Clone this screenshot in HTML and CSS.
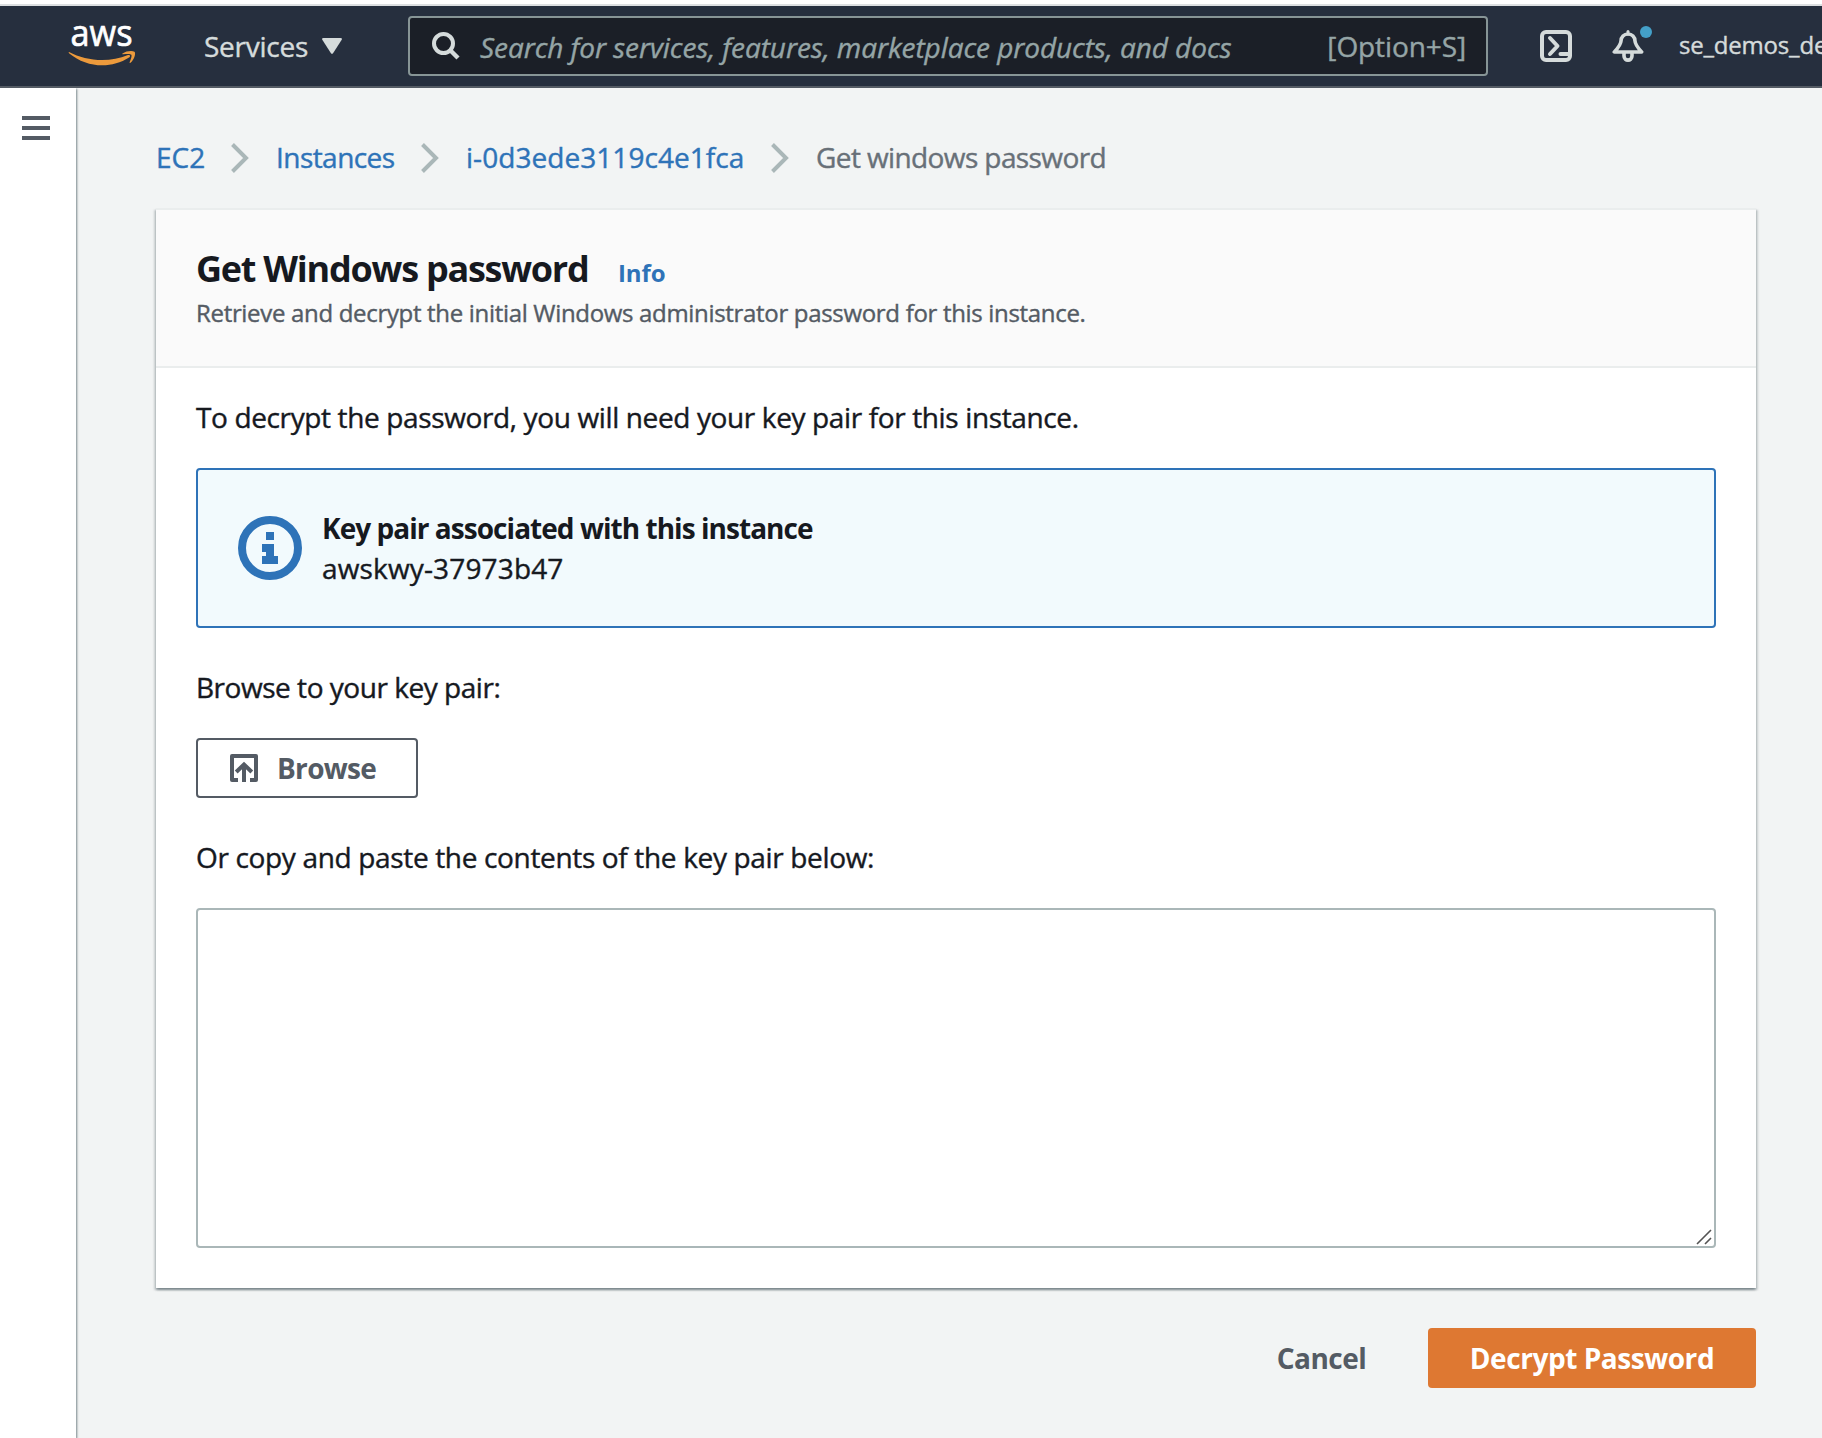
FILE: index.html
```html
<!DOCTYPE html>
<html lang="en">
<head>
<meta charset="utf-8">
<title>Get Windows password | EC2</title>
<link rel="stylesheet" href="styles.css">
</head>
<body>
<header class="nav">
  <svg class="logo" width="68" height="72" viewBox="68 10 68 72">
    <text x="70.500" y="46" textLength="62" lengthAdjust="spacingAndGlyphs">aws</text>
    <path d="M69 52 C86 61 109 63 128 55 C130 54.500 131 56.500 129 57.500 C111 69 87 68 69 53.200 C68.600 52.600 68.600 52 69 52 Z"/>
    <path d="M122.500 53.500 C126 51 132 50.400 134.500 51.700 C136 53 134.500 59.500 130.500 62.700 C129.700 63.200 129.300 62.800 129.700 62 C131 59 132 55.800 131.400 54.700 C130.300 53.500 126.500 53.900 123.200 54.300 C122.300 54.400 122 53.900 122.500 53.500 Z"/>
  </svg>
  <div class="services"><span class="t-services">Services</span>
    <svg width="20" height="16" viewBox="0 0 20 16"><path d="M1.500 0H18.500Q20.500 0 19.700 1.700L11.200 15Q10 16.700 8.800 15L.3 1.700Q-.5 0 1.500 0Z" fill="#d5dbdb"/></svg>
  </div>
  <div class="search">
    <svg width="28" height="28" viewBox="0 0 28 28" fill="none" stroke="#d5dbdb"><circle cx="11.500" cy="11.500" r="9.500" stroke-width="4"/><path d="M18 18L26 26" stroke-width="4.400"/></svg>
    <span class="placeholder">Search for services, features, marketplace products, and docs</span>
    <span class="shortcut">[Option+S]</span>
  </div>
  <svg class="shell" width="32" height="32" viewBox="0 0 32 32" fill="none" stroke="#d5dbdb" stroke-width="4"><rect x="2" y="2" width="28" height="28" rx="4"/><path d="M10 8L17.500 16L10 24" stroke-linecap="round" stroke-linejoin="round"/><path d="M20.500 24H29" stroke-linecap="round"/></svg>
  <div class="bell">
    <svg width="32" height="32" viewBox="0 0 32 32" fill="none" stroke="#d5dbdb" stroke-width="3.600" stroke-linejoin="round"><path d="M16 1.500V4" stroke-width="3" stroke-linecap="round"/><path d="M16 4C12 4 9 7 9 11C8.800 15 6 18 2.300 22H29.700C26 18 23.200 15 23 11C23 7 20 4 16 4Z"/><path d="M12 23V26C12 31.500 20 31.500 20 26V23"/></svg>
    <i class="dot"></i>
  </div>
  <span class="account">se_demos_de</span>
</header>
<div class="page">
  <aside class="side"><div class="burger"><i></i><i></i><i></i></div></aside>
  <main>
    <nav class="crumbs">
      <a class="c1">EC2</a>
      <svg width="18" height="30" viewBox="0 0 18 30"><path d="M1.500 1.500L15 15L1.500 28.500"/></svg>
      <a class="c2">Instances</a>
      <svg width="18" height="30" viewBox="0 0 18 30"><path d="M1.500 1.500L15 15L1.500 28.500"/></svg>
      <a class="c3">i-0d3ede3119c4e1fca</a>
      <svg width="18" height="30" viewBox="0 0 18 30"><path d="M1.500 1.500L15 15L1.500 28.500"/></svg>
      <span class="c4">Get windows password</span>
    </nav>
    <section class="card">
      <div class="card-head">
        <div class="title-row"><h1>Get Windows password</h1><a class="info">Info</a></div>
        <p class="desc">Retrieve and decrypt the initial Windows administrator password for this instance.</p>
      </div>
      <div class="card-body">
        <p class="intro">To decrypt the password, you will need your key pair for this instance.</p>
        <div class="alert">
          <svg width="64" height="64" viewBox="0 0 64 64"><circle cx="32" cy="32" r="28" fill="none" stroke="#2e73b8" stroke-width="8"/><path d="M28 16H36V24H28ZM24 28H36V40H40V48H24V40H28V36H24Z" fill="#2e73b8"/></svg>
          <div><h2>Key pair associated with this instance</h2><p class="key">awskwy-37973b47</p></div>
        </div>
        <p class="label browse-label">Browse to your key pair:</p>
        <button class="browse"><svg width="28" height="28" viewBox="0 0 28 28" fill="none" stroke="#545b64" stroke-width="4"><path d="M8 26H2V2H26V26H20" stroke-linejoin="round"/><path d="M14 28V11M6.200 18L14 10.500L21.800 18"/></svg><span>Browse</span></button>
        <p class="label paste-label">Or copy and paste the contents of the key pair below:</p>
        <div class="area"><textarea></textarea><svg class="grip" width="16" height="16" viewBox="0 0 16 16"><path d="M1 15L15 1M9 15L15 9"/></svg></div>
      </div>
    </section>
    <div class="actions"><button class="cancel">Cancel</button><button class="primary">Decrypt Password</button></div>
  </main>
</div>
</body>
</html>
```
FILE: styles.css
```css
* { box-sizing: border-box; margin: 0; padding: 0; }
html, body { height: 100%; overflow: hidden; }
body { font: 400 28px/40px "Open Sans", "Noto Sans", sans-serif; color: #16191f; background: #fff; display: flex; flex-direction: column; padding-top: 4px; -webkit-text-stroke: .4px currentColor; }
svg { display: block; flex: none; }
button { font: inherit; font-weight: 700; background: none; border: 0; }
button, h1, h2, .info { -webkit-text-stroke: 0; }

.nav { flex: none; height: 84px; border-top: 2px solid #dcdfe1; border-bottom: 2px solid #545b64; background: #262f3e; display: flex; align-items: center; padding-left: 68px; color: #d5dbdb; white-space: nowrap; overflow: hidden; }
.nav > * { flex: none; }
.logo text { font-size: 37px; fill: #fff; stroke: #fff; stroke-width: .7px; -webkit-text-stroke: .7px #fff; }
.logo path { fill: #ec9a3c; }
.services { display: flex; align-items: center; justify-content: space-between; width: 139px; margin-left: 67px; }
.t-services { letter-spacing: -.25px; margin: -1px 0 0 1px; }
.search { width: 1080px; height: 60px; margin-left: 66px; border: 2px solid #879596; border-radius: 4px; background: #1b1f27; display: flex; align-items: center; padding: 0 20px 0 22px; color: #95a5a6; }
.placeholder { font-style: italic; margin: 1px 0 0 20px; letter-spacing: -.07px; }
.shortcut { margin-left: auto; letter-spacing: -.1px; }
.shell { margin-left: 52px; }
.bell { position: relative; margin-left: 40px; }
.dot { position: absolute; right: -8px; top: -4px; width: 12px; height: 12px; border-radius: 50%; background: #44a0c8; }
.account { font-size: 24px; margin: -3px 0 0 35px; letter-spacing: -.2px; }

.page { flex: 1; display: flex; min-height: 0; }
.side { width: 76px; background: #fff; box-shadow: 1px 1px 2px rgba(0,28,36,.5); padding: 28px 22px; z-index: 1; clip-path: inset(0 -5px 0 0); }
.burger { display: grid; gap: 6px; width: 28px; }
.burger i { height: 4px; background: #545b64; }
main { flex: 1; background: #f2f4f4; padding: 49px 66px 0 80px; }

.crumbs { display: flex; align-items: center; color: #2e73b8; white-space: nowrap; }
.crumbs path { fill: none; stroke: #aab7b8; stroke-width: 4; }
.crumbs svg { margin-top: 2px; }
.crumbs a, .crumbs span { flex: none; }
.c1 { width: 75px; }
.c2 { width: 172px; padding-left: 27px; letter-spacing: -.55px; }
.c3 { width: 332px; padding-left: 27px; letter-spacing: .05px; }
.c4 { padding-left: 27px; letter-spacing: -.6px; color: #687078; }

.card { margin-top: 31px; background: #fff; border-top: 2px solid #eaeded; box-shadow: 0 2px 2px rgba(0,28,36,.3), 2px 2px 2px rgba(0,28,36,.15), -2px 2px 2px rgba(0,28,36,.15); width: 1600px; }
.card-head { background: #fafafa; border-bottom: 2px solid #eaeded; padding: 37px 40px 35px; }
.title-row { display: flex; align-items: baseline; height: 44px; }
h1 { font-size: 36px; line-height: 44px; letter-spacing: -1.25px; width: 422px; white-space: nowrap; }
.info { font-size: 24px; font-weight: 700; color: #2e73b8; letter-spacing: -.1px; }
.desc { font-size: 24px; line-height: 36px; margin-top: 4px; color: #545b64; letter-spacing: -.32px; }
.card-body { padding: 29px 40px 40px; }
.intro { letter-spacing: -.37px; }
.alert { margin-top: 31px; height: 160px; border: 2px solid #2e73b8; border-radius: 4px; background: #f2fafd; display: flex; align-items: center; padding: 0 40px; gap: 20px; }
.alert h2 { font-size: 28px; line-height: 40px; letter-spacing: -.96px; margin-top: -1px; }
.key { letter-spacing: .15px; }
.label { margin-top: 39px; }
.browse-label { letter-spacing: -.47px; }
.paste-label { letter-spacing: -.34px; }
.browse { margin-top: 31px; width: 222px; height: 60px; border: 2px solid #545b64; border-radius: 4px; color: #545b64; display: flex; align-items: center; padding-left: 32px; gap: 19px; letter-spacing: -.7px; }
.area { position: relative; margin-top: 31px; height: 340px; }
.area textarea { display: block; width: 100%; height: 100%; border: 2px solid #aab7b8; border-radius: 4px; resize: none; background: #fff; outline: 0; }
.grip { position: absolute; right: 4px; bottom: 3px; fill: none; stroke: #545454; stroke-width: 1.6; }

.actions { margin-top: 40px; width: 1600px; display: flex; justify-content: flex-end; }
.cancel { height: 60px; width: 192px; padding-left: 3px; color: #545b64; letter-spacing: -.5px; }
.primary { width: 328px; height: 60px; border-radius: 4px; background: #de7832; color: #fff; letter-spacing: -.45px; margin-left: 12px; }
```
